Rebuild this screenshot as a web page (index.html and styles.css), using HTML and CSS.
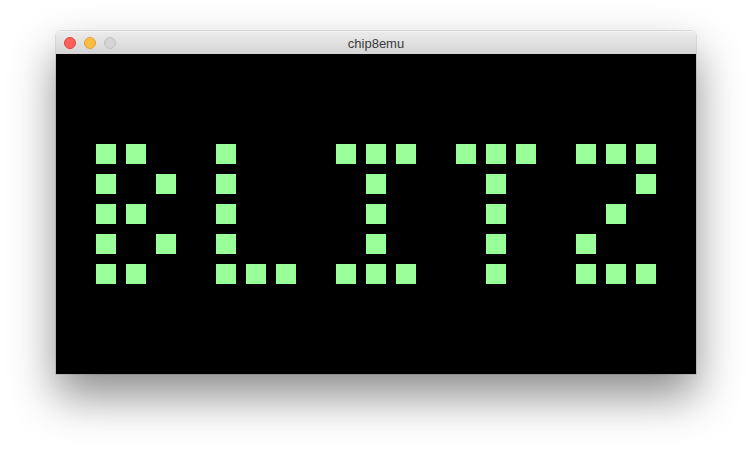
FILE: index.html
```html
<!DOCTYPE html>
<html>
<head>
<meta charset="utf-8">
<title>chip8emu</title>
<link rel="stylesheet" href="styles.css">
</head>
<body>
<div class="desk">
  <div class="window">
    <div class="titlebar">
      <div class="lights">
        <span class="light red"></span>
        <span class="light yellow"></span>
        <span class="light grey"></span>
      </div>
      <div class="title">chip8emu</div>
      <div></div>
    </div>
    <div class="screen">
      <div class="glyph">
        <i class="on"></i><i class="on"></i><i></i>
        <i class="on"></i><i></i><i class="on"></i>
        <i class="on"></i><i class="on"></i><i></i>
        <i class="on"></i><i></i><i class="on"></i>
        <i class="on"></i><i class="on"></i><i></i>
      </div>
      <div class="glyph">
        <i class="on"></i><i></i><i></i>
        <i class="on"></i><i></i><i></i>
        <i class="on"></i><i></i><i></i>
        <i class="on"></i><i></i><i></i>
        <i class="on"></i><i class="on"></i><i class="on"></i>
      </div>
      <div class="glyph">
        <i class="on"></i><i class="on"></i><i class="on"></i>
        <i></i><i class="on"></i><i></i>
        <i></i><i class="on"></i><i></i>
        <i></i><i class="on"></i><i></i>
        <i class="on"></i><i class="on"></i><i class="on"></i>
      </div>
      <div class="glyph">
        <i class="on"></i><i class="on"></i><i class="on"></i>
        <i></i><i class="on"></i><i></i>
        <i></i><i class="on"></i><i></i>
        <i></i><i class="on"></i><i></i>
        <i></i><i class="on"></i><i></i>
      </div>
      <div class="glyph">
        <i class="on"></i><i class="on"></i><i class="on"></i>
        <i></i><i></i><i class="on"></i>
        <i></i><i class="on"></i><i></i>
        <i class="on"></i><i></i><i></i>
        <i class="on"></i><i class="on"></i><i class="on"></i>
      </div>
    </div>
  </div>
</div>
</body>
</html>
```

FILE: styles.css
```css
html, body {
  margin: 0;
  padding: 0;
  background: #ffffff;
}

.desk {
  padding: 31px 56px 80px 56px;
  min-height: 454px;
  box-sizing: border-box;
}

.window {
  width: 640px;
  border-radius: 5px 5px 0 0;
  box-shadow: 0 0 0 1px rgba(0, 0, 0, 0.1), 0 22px 45px rgba(0, 0, 0, 0.45);
  overflow: hidden;
}

.titlebar {
  height: 22px;
  display: grid;
  grid-template-columns: 1fr auto 1fr;
  align-items: center;
  background: linear-gradient(to bottom, #ebebeb, #d5d5d5);
  border-top: 1px solid #f4f4f4;
}

.lights {
  display: flex;
  gap: 8px;
  padding-left: 8px;
}

.light {
  width: 12px;
  height: 12px;
  border-radius: 50%;
  box-sizing: border-box;
}

.red {
  background: #fc605c;
  border: 1px solid #e0443e;
}

.yellow {
  background: #fdbc40;
  border: 1px solid #dea236;
}

.grey {
  background: #d4d4d4;
  border: 1px solid #c0c0c0;
}

.title {
  font-family: "Liberation Sans", Arial, sans-serif;
  font-size: 13px;
  color: #3a3a3a;
}

.screen {
  width: 640px;
  height: 320px;
  box-sizing: border-box;
  background: #000000;
  padding: 90px 40px;
  display: flex;
  gap: 40px;
}

.glyph {
  display: grid;
  grid-template-columns: repeat(3, 20px);
  grid-template-rows: repeat(5, 20px);
  gap: 10px;
}

.glyph i {
  display: block;
}

.glyph i.on {
  background: #99ff99;
}
```
